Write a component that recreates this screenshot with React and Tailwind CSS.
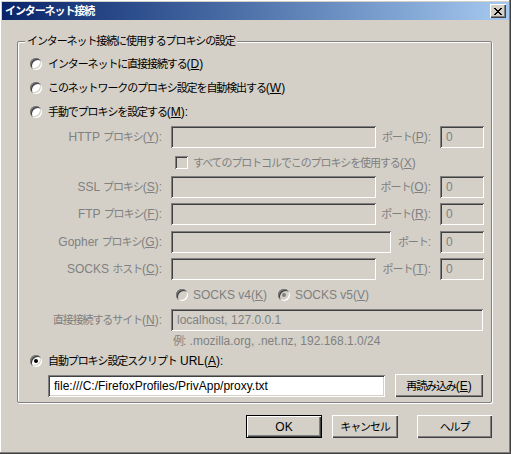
import React from "react";

const sunken =
  "shadow-[inset_1px_1px_0_#808080,inset_-1px_-1px_0_#ffffff,inset_2px_2px_0_#404040,inset_-2px_-2px_0_#d4d0c8]";
const raised =
  "shadow-[inset_1px_1px_0_#ffffff,inset_-1px_-1px_0_#404040,inset_-2px_-2px_0_#808080]";

const CJK = /([\u3000-\u30ff\u4e00-\u9fff\uff00-\uffef]+)/;

function splitText(str, keyBase) {
  return str.split(CJK).map((part, i) =>
    part === "" ? null : CJK.test(part) ? (
      <span key={keyBase + "-" + i} className="text-[11px] tracking-[-1.1px]">
        {part}
      </span>
    ) : (
      <React.Fragment key={keyBase + "-" + i}>{part}</React.Fragment>
    )
  );
}

function T({ children }) {
  return (
    <>
      {React.Children.map(children, (c, i) =>
        typeof c === "string" ? splitText(c, "k" + i) : c
      )}
    </>
  );
}

function Radio({ checked, disabled }) {
  return (
    <span
      className={`w-[12px] h-[12px] shrink-0 rounded-full flex items-center justify-center ${sunken} ${
        disabled ? "bg-[#d4d0c8]" : "bg-white"
      }`}
    >
      {checked && (
        <span
          className={`w-[4px] h-[4px] rounded-full ${
            disabled ? "bg-[#808080]" : "bg-black"
          }`}
        />
      )}
    </span>
  );
}

function Field({ label, width, port, portLabel }) {
  return (
    <div className="flex items-center w-[466px] h-[22px]">
      <div className="w-[153px] pr-[9px] text-right text-[#808080] whitespace-nowrap">
        {label}
      </div>
      <div className={`h-[22px] bg-[#d4d0c8] ${sunken}`} style={{ width }} />
      <div className="flex-1 text-right text-[#808080] whitespace-nowrap">
        {portLabel}
      </div>
      <div
        className={`ml-[9px] w-[44px] h-[22px] bg-[#d4d0c8] ${sunken} flex items-center pl-[6px] text-[#808080]`}
      >
        {port}
      </div>
    </div>
  );
}

function Button({ children, w, def }) {
  return (
    <div
      className={`${w} h-[23px] flex items-center justify-center bg-[#d4d0c8] ${
        def ? "border border-black" : ""
      }`}
    >
      <div className={`w-full h-full flex items-center justify-center whitespace-nowrap ${raised}`}>
        {children}
      </div>
    </div>
  );
}

export default function App() {
  return (
    <div className="w-[511px] h-[454px] bg-[#d4d0c8] flex flex-col pt-[2px] px-[2px] shadow-[inset_-1px_-1px_0_#404040,inset_-2px_-2px_0_#808080,inset_1px_1px_0_#ffffff] font-['Liberation_Sans','Noto_Sans_CJK_JP',sans-serif] text-[12px] leading-[14px] text-black">
      {/* title bar */}
      <div className="h-[18px] flex items-center pl-[3px] pr-[3px] bg-linear-to-r from-[#0a246a] to-[#a6caf0]">
        <span className="text-white font-bold">
          <T>インターネット接続</T>
        </span>
        <div
          className={`ml-auto w-[16px] h-[14px] bg-[#d4d0c8] ${raised} flex items-center justify-center`}
        >
          <svg width="8" height="7" viewBox="0 0 8 7" shapeRendering="crispEdges">
            <path
              d="M0 0h2v1H0zM6 0h2v1H6zM1 1h2v1H1zM5 1h2v1H5zM2 2h4v1H2zM3 3h2v1H3zM2 4h4v1H2zM1 5h2v1H1zM5 5h2v1H5zM0 6h2v1H0zM6 6h2v1H6z"
              fill="#000"
            />
          </svg>
        </div>
      </div>

      {/* group box */}
      <div className="relative mt-[21px] ml-[15px] w-[475px] h-[362px] border border-[#808080] rounded-[2px] shadow-[inset_1px_1px_0_#ffffff,1px_1px_0_#ffffff] pt-[10px]">
        <div className="absolute left-[7px] top-[-8px] px-[2px] bg-[#d4d0c8] whitespace-nowrap">
          <T>インターネット接続に使用するプロキシの設定</T>
        </div>

        <div className="flex items-center h-[24px] pl-[12px] gap-[6px]">
          <Radio />
          <span className="whitespace-nowrap">
            <T>インターネットに直接接続する(</T>
            <u>D</u>)
          </span>
        </div>
        <div className="flex items-center h-[24px] pl-[12px] gap-[6px]">
          <Radio />
          <span className="whitespace-nowrap">
            <T>このネットワークのプロキシ設定を自動検出する(</T>
            <u>W</u>)
          </span>
        </div>
        <div className="flex items-center h-[24px] pl-[12px] gap-[6px]">
          <Radio />
          <span className="whitespace-nowrap">
            <T>手動でプロキシを設定する(</T>
            <u>M</u>):
          </span>
        </div>

        <div className="mt-[2px]">
          <Field
            label={<><T>HTTP プロキシ(</T><u>Y</u>):</>}
            width="205px"
            portLabel={<><T>ポート(</T><u>P</u>):</>}
            port="0"
          />
        </div>
        <div className="mt-[8px] h-[13px] pl-[157px] flex items-center gap-[5px]">
          <span className={`w-[13px] h-[13px] bg-[#d4d0c8] ${sunken}`} />
          <span className="text-[#808080] whitespace-nowrap">
            <T>すべてのプロトコルでこのプロキシを使用する(</T>
            <u>X</u>)
          </span>
        </div>
        <div className="mt-[7px]">
          <Field
            label={<><T>SSL プロキシ(</T><u>S</u>):</>}
            width="205px"
            portLabel={<><T>ポート(</T><u>O</u>):</>}
            port="0"
          />
        </div>
        <div className="mt-[5px]">
          <Field
            label={<><T>FTP プロキシ(</T><u>F</u>):</>}
            width="205px"
            portLabel={<><T>ポート(</T><u>R</u>):</>}
            port="0"
          />
        </div>
        <div className="mt-[6px]">
          <Field
            label={<><T>Gopher プロキシ(</T><u>G</u>):</>}
            width="220px"
            portLabel={<T>ポート:</T>}
            port="0"
          />
        </div>
        <div className="mt-[5px]">
          <Field
            label={<><T>SOCKS ホスト(</T><u>C</u>):</>}
            width="205px"
            portLabel={<><T>ポート(</T><u>T</u>):</>}
            port="0"
          />
        </div>

        <div className="mt-[9px] h-[12px] pl-[158px] flex items-center text-[#808080]">
          <div className="w-[102px] flex items-center gap-[5px]">
            <Radio disabled />
            <span className="whitespace-nowrap">
              SOCKS v4(<u>K</u>)
            </span>
          </div>
          <div className="flex items-center gap-[5px]">
            <Radio disabled checked />
            <span className="whitespace-nowrap">
              SOCKS v5(<u>V</u>)
            </span>
          </div>
        </div>

        <div className="mt-[8px] flex items-center h-[22px]">
          <div className="w-[153px] pr-[9px] text-right text-[#808080] whitespace-nowrap">
            <T>直接接続するサイト(</T>
            <u>N</u>):
          </div>
          <div
            className={`w-[312px] h-[22px] bg-[#d4d0c8] ${sunken} flex items-center pl-[6px] text-[#808080] whitespace-nowrap`}
          >
            localhost, 127.0.0.1
          </div>
        </div>
        <div className="mt-[3px] h-[14px] pl-[155px] text-[#808080] whitespace-nowrap">
          <T>例: .mozilla.org, .net.nz, 192.168.1.0/24</T>
        </div>

        <div className="mt-[7px] h-[12px] pl-[12px] flex items-center gap-[6px]">
          <Radio checked />
          <span className="whitespace-nowrap">
            <T>自動プロキシ設定スクリプト URL(</T>
            <u>A</u>):
          </span>
        </div>
        <div className="mt-[7px] pl-[30px] flex items-end gap-[10px]">
          <div
            className={`w-[337px] h-[22px] bg-white ${sunken} flex items-center pl-[6px] whitespace-nowrap`}
          >
            file:///C:/FirefoxProfiles/PrivApp/proxy.txt
          </div>
          <Button w="w-[88px]">
            <T>再読み込み(</T>
            <u>E</u>)
          </Button>
        </div>
      </div>

      {/* bottom buttons */}
      <div className="mt-[12px] flex justify-end pr-[17px]">
        <Button w="w-[76px]" def>
          OK
        </Button>
        <div className="ml-[10px]">
          <Button w="w-[66px]">
            <T>キャンセル</T>
          </Button>
        </div>
        <div className="ml-[19px]">
          <Button w="w-[75px]">
            <T>ヘルプ</T>
          </Button>
        </div>
      </div>
    </div>
  );
}
